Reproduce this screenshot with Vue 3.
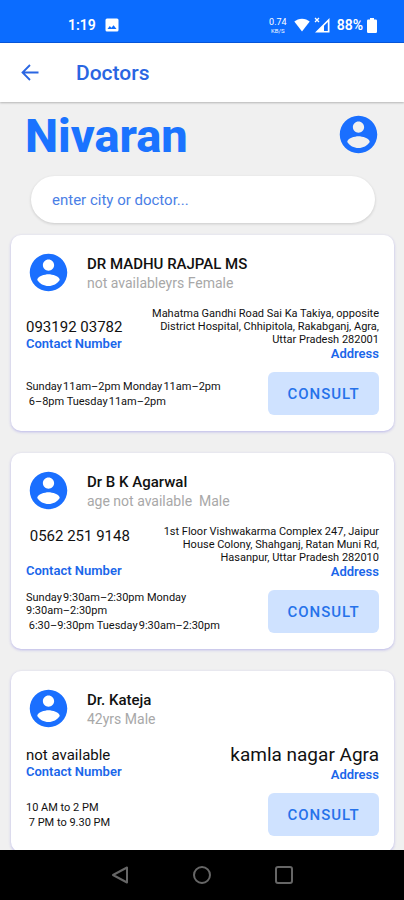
<script setup>
import { ref } from 'vue'

const query = ref('')
const avatarPath =
  'M12 2C6.48 2 2 6.48 2 12s4.48 10 10 10 10-4.48 10-10S17.52 2 12 2zm0 3c1.66 0 3 1.34 3 3s-1.34 3-3 3-3-1.34-3-3 1.34-3 3-3zm0 14.2c-2.5 0-4.71-1.28-6-3.22.03-1.99 4-3.08 6-3.08 1.99 0 5.97 1.09 6 3.08-1.29 1.94-3.5 3.22-6 3.22z'

const doctors = [
  {
    name: 'DR MADHU RAJPAL MS',
    detail: 'not availableyrs Female',
    phone: '093192 03782',
    address:
      'Mahatma Gandhi Road Sai Ka Takiya, opposite\nDistrict Hospital, Chhipitola, Rakabganj, Agra,\nUttar Pradesh 282001',
    hours: ['Sunday\u200a11am–2pm Monday\u200a11am–2pm', ' 6–8pm Tuesday\u200a11am–2pm'],
  },
  {
    name: 'Dr B K Agarwal',
    detail: 'age not available  Male',
    phone: ' 0562 251 9148\n ',
    address:
      '1st Floor Vishwakarma Complex 247, Jaipur\nHouse Colony, Shahganj, Ratan Muni Rd,\nHasanpur, Uttar Pradesh 282010',
    hours: [
      'Sunday\u200a9:30am–2:30pm Monday\n9:30am–2:30pm',
      ' 6:30–9:30pm Tuesday\u200a9:30am–2:30pm',
    ],
  },
  {
    name: 'Dr. Kateja',
    detail: '42yrs Male',
    phone: 'not available',
    address: 'kamla nagar Agra',
    large: true,
    hours: ['10 AM to 2 PM', ' 7 PM to 9.30 PM'],
  },
]
</script>

<template>
  <div class="screen">
    <div class="status">
      <div class="status-group">
        <span class="status-text">1:19</span>
        <svg class="picture" viewBox="0 0 14 14" aria-hidden="true">
          <path fill="#fff" fill-rule="evenodd" d="M2 0.5h10a1.5 1.5 0 0 1 1.5 1.5v10a1.5 1.5 0 0 1-1.5 1.5H2A1.5 1.5 0 0 1 .5 12V2A1.5 1.5 0 0 1 2 .5zM2.5 11h9L8.6 7.2 6.4 9.8 4.8 8z" />
        </svg>
      </div>
      <div class="status-group right">
        <span class="speed"><span>0.74</span><span class="unit">KB/S</span></span>
        <svg class="wifi" viewBox="0 0 16 14" aria-hidden="true">
          <path fill="#fff" d="M8 13.5L.3 3.6C2.3 1.9 5 .8 8 .8s5.700 1.100 7.700 2.800z" />
        </svg>
        <svg class="signal" viewBox="0 0 16 16" aria-hidden="true">
          <path fill="#fff" fill-rule="evenodd" d="M15.500 1v14.500H1zM13.800 5L10 8.800v5.100h3.800z" />
          <path stroke="#fff" stroke-width="1.300" d="M1 1l4 4M5 1L1 5" />
        </svg>
        <span class="status-text">88%</span>
        <svg class="battery" viewBox="0 0 10 15" aria-hidden="true">
          <path fill="#fff" d="M3 0h4v1.500h1.800a1.200 1.200 0 0 1 1.200 1.200v11a1.200 1.200 0 0 1-1.200 1.200H1.200A1.200 1.200 0 0 1 0 13.700v-11a1.200 1.200 0 0 1 1.200-1.200H3z" />
        </svg>
      </div>
    </div>

    <header class="appbar">
      <button class="back" type="button" aria-label="Back">
        <svg viewBox="0 0 18 18" aria-hidden="true">
          <path fill="none" stroke="#2a66e2" stroke-width="1.800" d="M17.500 8.500H2M9 1L1.500 8.500 9 16" />
        </svg>
      </button>
      <h1>Doctors</h1>
    </header>

    <main>
      <div class="brand">
        <h2>Nivaran</h2>
        <button class="profile" type="button" aria-label="Profile">
          <svg class="avatar" viewBox="0 0 24 24" aria-hidden="true"><path :d="avatarPath" /></svg>
        </button>
      </div>
      <input v-model="query" class="search" type="text" aria-label="Search" placeholder="enter city or doctor..." />

      <section class="list">
        <article v-for="doctor in doctors" :key="doctor.name" class="card">
          <div class="identity">
            <svg class="avatar" viewBox="0 0 24 24" aria-hidden="true"><path :d="avatarPath" /></svg>
            <div>
              <h3>{{ doctor.name }}</h3>
              <p class="detail">{{ doctor.detail }}</p>
            </div>
          </div>
          <div class="info">
            <div>
              <p class="phone">{{ doctor.phone }}</p>
              <p class="label">Contact Number</p>
            </div>
            <div class="place">
              <p class="address" :class="{ large: doctor.large }">{{ doctor.address }}</p>
              <p class="label">Address</p>
            </div>
          </div>
          <div class="booking">
            <div class="hours">
              <p v-for="line in doctor.hours" :key="line">{{ line }}</p>
            </div>
            <button class="consult" type="button">CONSULT</button>
          </div>
        </article>
      </section>
    </main>

    <nav class="system">
      <button type="button" aria-label="System back">
        <svg viewBox="0 0 20 20" aria-hidden="true"><path d="M17 2.500v15L3 10z" /></svg>
      </button>
      <button type="button" aria-label="Home">
        <svg viewBox="0 0 20 20" aria-hidden="true"><circle cx="10" cy="10" r="8" /></svg>
      </button>
      <button type="button" aria-label="Recent apps">
        <svg viewBox="0 0 20 20" aria-hidden="true"><rect x="2" y="2" width="16" height="16" rx="2" /></svg>
      </button>
    </nav>
  </div>
</template>

<style>
body {
  background: #f0f0f0;
}
</style>

<style scoped>
.screen {
  display: flex;
  flex-direction: column;
  height: 100vh;
  font-family: Roboto, "Liberation Sans", sans-serif;
  color: #111;
}
h1, h2, h3, p {
  margin: 0;
}
button {
  display: flex;
  align-items: center;
  justify-content: center;
  padding: 0;
  border: 0;
  background: none;
  font-family: inherit;
}
svg {
  display: block;
  flex: none;
}
.status {
  display: flex;
  flex: none;
  align-items: center;
  justify-content: space-between;
  box-sizing: border-box;
  height: 43px;
  padding: 8px 27px 0 68px;
  border-bottom: 1px solid #0757dc;
  background: #0b6cff;
  color: #fff;
}
.status-group {
  display: flex;
  align-items: center;
  gap: 9px;
}
.status-group.right {
  gap: 4px;
}
.status-text {
  font-size: 14px;
  font-weight: 600;
  line-height: 16px;
}
.picture {
  width: 14px;
  height: 14px;
}
.speed {
  display: flex;
  flex-direction: column;
  align-items: center;
  margin-right: 3px;
  font-size: 9px;
  line-height: 10px;
}
.unit {
  font-size: 6px;
  line-height: 7px;
}
.wifi {
  width: 16px;
  height: 14px;
}
.signal {
  width: 16px;
  height: 16px;
  margin-right: 3px;
}
.battery {
  width: 10px;
  height: 15px;
}
.appbar {
  display: flex;
  flex: none;
  align-items: center;
  gap: 37px;
  height: 59px;
  padding: 0 21px;
  background: #fff;
  box-shadow: 0 1px 2px rgba(0, 0, 0, 0.25);
  z-index: 1;
}
.back svg {
  width: 18px;
  height: 18px;
}
h1 {
  font-size: 21px;
  font-weight: 500;
  line-height: 24px;
  color: #2a66e2;
}
main {
  flex: 1;
  min-height: 0;
  overflow: hidden;
  background: #f0f0f0;
}
.brand {
  display: flex;
  align-items: flex-start;
  justify-content: space-between;
  padding: 10px 23px 0 25px;
}
h2 {
  font-size: 47px;
  font-weight: 800;
  line-height: 48px;
  color: #1a73ff;
}
.avatar {
  width: 45px;
  height: 45px;
  fill: #1a6fff;
}
.search {
  display: block;
  box-sizing: border-box;
  width: calc(100% - 60px);
  height: 47px;
  margin: 16px 29px 12px 31px;
  padding: 0 21px;
  border: 0;
  border-radius: 24px;
  background: #fff;
  box-shadow: 0 1px 3px rgba(0, 0, 0, 0.16);
  font-family: inherit;
  font-size: 15px;
  color: #3a74e4;
}
.search::placeholder {
  color: #4a80e6;
  opacity: 1;
}
.list {
  display: flex;
  flex-direction: column;
  gap: 22px;
  padding: 0 10px 0 11px;
}
.card {
  padding: 15px 15px 16px;
  border-radius: 10px;
  background: #fff;
  box-shadow: 0 1px 3px rgba(60, 50, 220, 0.3);
}
.identity {
  display: flex;
  align-items: center;
  gap: 16px;
}
h3 {
  font-size: 15px;
  font-weight: 500;
  line-height: 20px;
}
.detail {
  font-size: 14px;
  line-height: 18px;
  color: #a8a8a8;
  white-space: pre;
}
.info {
  display: flex;
  align-items: center;
  justify-content: space-between;
  margin-top: 12px;
}
.phone {
  font-size: 15px;
  line-height: 18px;
  white-space: pre;
}
.label {
  font-size: 13px;
  font-weight: 600;
  line-height: 16px;
  color: #1a66ea;
}
.place {
  text-align: right;
}
.address {
  font-size: 11px;
  line-height: 13px;
  white-space: pre-line;
}
.address.large {
  font-size: 19px;
  line-height: 24px;
}
.booking {
  display: flex;
  align-items: center;
  justify-content: space-between;
  margin-top: 10px;
}
.hours {
  display: flex;
  flex-direction: column;
  gap: 2px;
  font-size: 11px;
  line-height: 13px;
  white-space: pre;
}
.consult {
  width: 111px;
  height: 43px;
  border-radius: 6px;
  background: #cfe2ff;
  color: #2672ea;
  font-size: 15px;
  font-weight: 500;
  letter-spacing: 1px;
}
.system {
  display: flex;
  flex: none;
  align-items: center;
  justify-content: center;
  gap: 62px;
  height: 50px;
  background: #000;
}
.system svg {
  width: 20px;
  height: 20px;
  fill: none;
  stroke: #666;
  stroke-width: 2;
  stroke-linejoin: round;
}
</style>
